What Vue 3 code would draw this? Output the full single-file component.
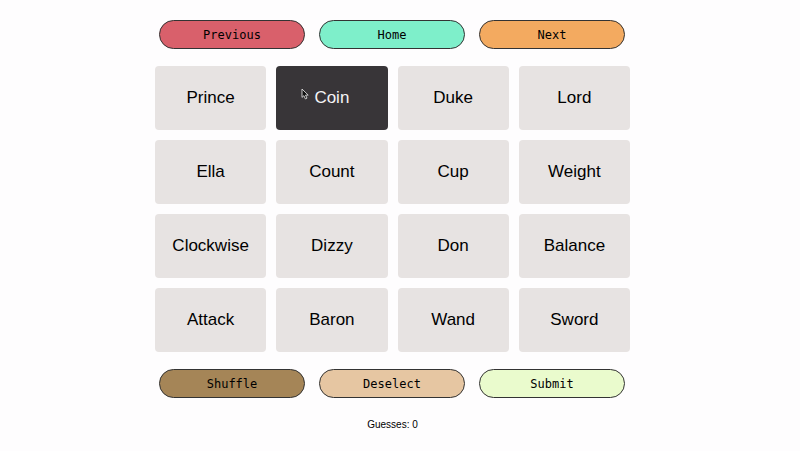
<script setup>
import { ref } from 'vue'

const words = ref([
  'Prince', 'Coin', 'Duke', 'Lord',
  'Ella', 'Count', 'Cup', 'Weight',
  'Clockwise', 'Dizzy', 'Don', 'Balance',
  'Attack', 'Baron', 'Wand', 'Sword',
])
const selected = ref(['Coin'])
const guesses = ref(0)

function toggle(word) {
  if (selected.value.includes(word)) {
    selected.value = selected.value.filter((w) => w !== word)
  } else if (selected.value.length < 4) {
    selected.value = [...selected.value, word]
  }
}

function shuffle() {
  words.value = [...words.value].sort(() => Math.random() - 0.5)
}

function submit() {
  if (selected.value.length === 4) guesses.value++
}
</script>

<template>
  <div class="page">
    <main class="game">
      <nav class="row">
        <button type="button" class="pill previous">Previous</button>
        <button type="button" class="pill home">Home</button>
        <button type="button" class="pill next">Next</button>
      </nav>
      <div class="board">
        <button
          v-for="word in words"
          :key="word"
          type="button"
          class="tile"
          :class="{ selected: selected.includes(word) }"
          :aria-pressed="selected.includes(word)"
          @click="toggle(word)"
        >
          {{ word }}
        </button>
      </div>
      <div class="row">
        <button type="button" class="pill shuffle" @click="shuffle">Shuffle</button>
        <button type="button" class="pill deselect" @click="selected = []">Deselect</button>
        <button type="button" class="pill submit" @click="submit">Submit</button>
      </div>
      <p class="guesses">Guesses: {{ guesses }}</p>
      <svg class="cursor" viewBox="0 0 8 12" aria-hidden="true">
        <path d="M1 1v8.4l1.9-1.7 1.5 3.2 1.6-.8-1.5-3h2.7z" fill="#111" stroke="#ddd" stroke-width=".9" />
      </svg>
    </main>
  </div>
</template>

<style>
body {
  margin: 0;
  background: #fefdfe;
}
</style>

<style scoped>
.page {
  padding: 20px 15px 20px 0;
}

.game {
  position: relative;
  max-width: 475px;
  margin: 0 auto;
  font-family: "Liberation Sans", Arial, sans-serif;
}

.row {
  display: grid;
  grid-template-columns: repeat(3, 1fr);
  gap: 14px;
  padding: 0 5px 0 4px;
}

.pill {
  padding: 1px 0 0;
  border: 1px solid #333;
  border-radius: 15px;
  color: #000;
  font: 12px/26px "DejaVu Sans Mono", monospace;
  cursor: pointer;
}

.previous { background: #d9606b; }
.home { background: #7eefca; }
.next { background: #f3aa60; }
.shuffle { background: #a58557; }
.deselect { background: #e6c6a2; }
.submit { background: #eafbcd; }

.board {
  display: grid;
  grid-template-columns: repeat(4, 1fr);
  gap: 10px;
  margin: 17px 0;
}

.tile {
  padding: 0;
  border: 0;
  border-radius: 4px;
  background: #e7e3e2;
  color: #000;
  font: 17px/64px "Liberation Sans", Arial, sans-serif;
  cursor: pointer;
}

.tile.selected {
  background: #383538;
  color: #f5f3f5;
}

.guesses {
  margin: 20px 0 0;
  text-align: center;
  font-size: 10px;
  line-height: 14px;
}

.cursor {
  position: absolute;
  top: 68px;
  left: 146px;
  width: 8px;
  height: 12px;
  pointer-events: none;
}
</style>
